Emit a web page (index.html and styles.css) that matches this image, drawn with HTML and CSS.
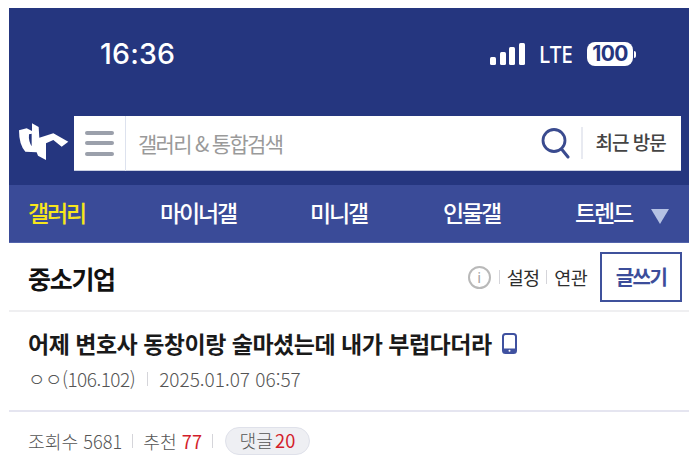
FILE: index.html
```html
<!DOCTYPE html>
<html lang="ko">
<head>
<meta charset="utf-8">
<title>중소기업</title>
<link rel="stylesheet" href="styles.css">
</head>
<body>
<div class="page">
  <header class="top">
    <div class="status">
      <span class="time">16:36</span>
      <div class="status-right">
        <svg class="signal" width="35" height="22" viewBox="0 0 35 22"><rect x="0" y="14" width="6" height="8" rx="1.500"/><rect x="10" y="9" width="6" height="13" rx="1.500"/><rect x="19" y="4" width="6" height="18" rx="1.500"/><rect x="29" y="0" width="6" height="22" rx="1.500"/></svg>
        <span class="lte">LTE</span>
        <span class="battery"><span class="batt-body">100</span><span class="batt-tip"></span></span>
      </div>
    </div>
    <div class="searchrow">
      <svg class="logo" width="60" height="55" viewBox="0 0 180 165"><path fill="#fff" fill-rule="evenodd" d="M66 25 L86 36 L88 68 L130 55 L175 80 L155 95 L130 75 L108 85 L108 135 L84 122 L80 112 L46 110 Q27 90 27 46 L50 40 L66 48 Z M57 58 Q55 78 65 94 L65 56 Z"/></svg>
      <div class="search">
        <div class="menu"><span></span><span></span><span></span></div>
        <div class="placeholder">갤러리 &amp; 통합검색</div>
        <svg class="glass" width="30" height="32" viewBox="0 0 30 32"><circle cx="13" cy="13.500" r="11" fill="none" stroke="#3a4b8f" stroke-width="2.800"/><path d="M20.500 22 L27 30" stroke="#3a4b8f" stroke-width="3" stroke-linecap="round"/></svg>
        <div class="recent">최근 방문</div>
      </div>
    </div>
  </header>
  <nav class="nav">
    <a class="on">갤러리</a>
    <a>마이너갤</a>
    <a>미니갤</a>
    <a>인물갤</a>
    <a>트렌드</a>
    <span class="tri"></span>
  </nav>
  <section class="titlebar">
    <h1>중소기업</h1>
    <div class="tools">
      <span class="info">i</span>
      <span class="vr"></span>
      <span class="tool">설정</span>
      <span class="vr"></span>
      <span class="tool">연관</span>
      <span class="write">글쓰기</span>
    </div>
  </section>
  <section class="post">
    <div class="subject">
      <span>어제 변호사 동창이랑 술마셨는데 내가 부럽다더라</span>
      <svg class="phone" width="15" height="21" viewBox="0 0 15 21"><rect x="1" y="1" width="13" height="19" rx="2.500" fill="none" stroke="#3f51a0" stroke-width="2"/><rect x="1" y="15.500" width="13" height="4.500" fill="#3f51a0"/><circle cx="7.500" cy="17.700" r="1" fill="#fff"/></svg>
    </div>
    <div class="meta"><span>ㅇㅇ(106.102)</span><span class="vr"></span><span>2025.01.07 06:57</span></div>
  </section>
  <section class="stats">
    <span>조회수 5681</span>
    <span class="vr"></span>
    <span>추천 <em>77</em></span>
    <span class="vr"></span>
    <span class="pill">댓글 <em>20</em></span>
  </section>
</div>
</body>
</html>
```
FILE: styles.css
```css
* { box-sizing: border-box; }
html, body { margin: 0; padding: 0; background: #fff; }
body { padding: 8px 0 0 9px; overflow: hidden; height: 461px; font-family: "Noto Sans CJK KR", "Noto Sans", sans-serif; }
.page { width: 680px; }
.top { height: 177px; background: #25367f; display: flex; flex-direction: column; }
.status { height: 108px; display: flex; justify-content: space-between; align-items: flex-start; padding: 28px 53px 0 91px; color: #fff; }
.time { font: 500 28.500px/36px Inter, "Noto Sans", sans-serif; letter-spacing: 0.2px; }
.status-right { display: flex; align-items: center; height: 36px; }
.signal { fill: #fff; margin-right: 14px; }
.lte { font: 500 23px/36px "Noto Sans", sans-serif; margin-right: 13px; transform: scaleX(.9); transform-origin: left; width: 35px; }
.battery { display: flex; align-items: center; }
.batt-body { width: 46px; height: 24px; border-radius: 8px; background: #fff; color: #25367f; font: 700 21px/24px Inter, sans-serif; text-align: center; letter-spacing: -.6px; }
.batt-tip { width: 2px; height: 7px; background: #fff; margin-left: 1px; border-radius: 0 2px 2px 0; }
.searchrow { display: flex; align-items: flex-start; }
.logo { margin: -1px 4px 0 1px; flex: none; }
.search { width: 607px; height: 55px; background: #fff; display: flex; align-items: center; border-bottom: 1px solid #c9cfe2; }
.menu { width: 52px; height: 55px; flex: none; display: flex; flex-direction: column; justify-content: center; gap: 6.500px; padding: 0 11px; border-right: 1px solid #dde2ee; }
.menu span { display: block; height: 4px; border-radius: 2px; background: #9ba0ab; }
.placeholder { flex: 1; padding-left: 12px; font-size: 21px; letter-spacing: -1.700px; color: #9a9a9a; }
.glass { flex: none; margin-right: 10px; }
.recent { flex: none; width: 100px; border-left: 2px solid #e8eaf1; height: 32px; line-height: 30px; padding-left: 12.500px; font-size: 19px; font-weight: 500; letter-spacing: -1px; color: #444; white-space: nowrap; }
.nav { height: 58px; background: #3a4b98; display: flex; align-items: center; position: relative; border-bottom: 1px solid #5264ac; }
.nav a { position: absolute; top: 10px; font-size: 23px; line-height: 34px; font-weight: 500; letter-spacing: -2.200px; color: #fff; white-space: nowrap; }
.nav a:nth-child(1) { left: 19px; }
.nav a:nth-child(2) { left: 151px; }
.nav a:nth-child(3) { left: 301px; }
.nav a:nth-child(4) { left: 434px; }
.nav a:nth-child(5) { left: 566px; }
.nav a.on { color: #f7e61c; }
.tri { position: absolute; left: 642px; top: 24px; width: 0; height: 0; border-left: 9px solid transparent; border-right: 9px solid transparent; border-top: 15px solid #b5c2e4; }
.titlebar { height: 69px; display: flex; justify-content: space-between; align-items: flex-start; padding: 9px 7px 0 19px; border-bottom: 2px solid #efeff1; }
h1 { margin: 8px 0 0; font-size: 25px; line-height: 36px; font-weight: 700; letter-spacing: -1.300px; color: #111; }
.tools { display: flex; align-items: center; }
.info { width: 23px; height: 23px; margin-right: 1px; border: 2px solid #b9b9b9; border-radius: 50%; color: #a6a6a6; font: 400 15px/19px "Noto Sans", sans-serif; text-align: center; }
.vr { display: inline-block; width: 1px; height: 14px; background: #d5d5da; margin: 0 7px; }
.tool { font-size: 18.500px; letter-spacing: -.7px; color: #2d2d2d; }
.tool + .vr { margin: 0 7px; }
.write { width: 82px; height: 50px; margin-left: 13px; border: 2px solid #3f519c; color: #3c4d9a; font-size: 20px; font-weight: 700; letter-spacing: -1.500px; line-height: 46px; text-align: center; }
.post { height: 100px; padding: 13px 19px 0; border-bottom: 2px solid #e5e5f0; }
.subject { display: flex; align-items: center; gap: 10px; height: 36px; font-size: 23px; font-weight: 700; letter-spacing: -.5px; color: #1a1a1a; white-space: nowrap; }
.meta { display: flex; align-items: center; margin-top: 5px; font-size: 19px; line-height: 26px; font-weight: 300; color: #555; }
.meta span:first-child { letter-spacing: -.5px; }
.meta .vr { margin: 0 11.500px; }
.stats { display: flex; align-items: center; height: 50px; padding: 8px 19px 0; font-size: 18.200px; font-weight: 300; color: #555; white-space: nowrap; }
.stats .vr { margin: 0 10px; }
.stats em { font-style: normal; font-weight: 400; color: #d31d2b; }
.pill { display: inline-block; height: 28px; line-height: 25px; margin-left: 2px; padding: 0 13.500px; background: #eeeff3; border: 1px solid #dfe1ea; border-radius: 14px; word-spacing: -3px; }
```
